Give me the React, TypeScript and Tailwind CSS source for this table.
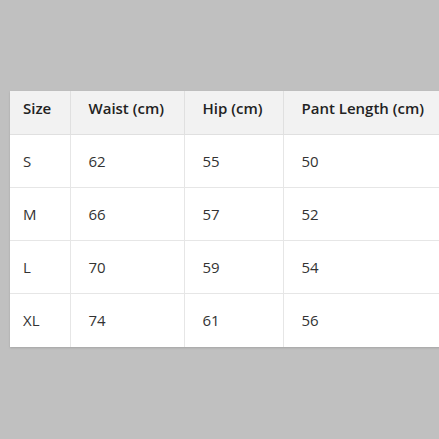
const rows = [
  ['S', '62', '55', '50'],
  ['M', '66', '57', '52'],
  ['L', '70', '59', '54'],
  ['XL', '74', '61', '56'],
];

export default function App() {
  return (
    <div className="h-[439px] w-[439px] overflow-hidden bg-[#c0c0c0] pt-[91px] pl-[10px] font-['Open_Sans',sans-serif]">
      <table className="w-[470px] table-fixed border-collapse bg-white text-left text-[15px] leading-[22px] text-[#333] shadow-[0_1px_2px_rgba(0,0,0,0.15)]">
        <colgroup>
          <col className="w-[60px]" />
          <col className="w-[114px]" />
          <col className="w-[99px]" />
          <col />
        </colgroup>
        <thead className="bg-[#f2f2f2]">
          <tr className="border-b border-[#e0e0e0]">
            <th className="pt-[6px] pb-[15px] pl-[13px] font-semibold text-[#222]">Size</th>
            <th className="border-l border-[#e0e0e0] pt-[6px] pb-[15px] pl-[18px] font-semibold text-[#222]">Waist (cm)</th>
            <th className="border-l border-[#e0e0e0] pt-[6px] pb-[15px] pl-[18px] font-semibold text-[#222]">Hip (cm)</th>
            <th className="border-l border-[#e0e0e0] pt-[6px] pb-[15px] pl-[18px] font-semibold text-[#222] whitespace-nowrap">Pant Length (cm)</th>
          </tr>
        </thead>
        <tbody>
          {rows.map((r, i) => {
            const last = i === rows.length - 1;
            const pad = last ? 'pt-[15px] pb-[16px]' : 'py-[15px]';
            return (
              <tr key={r[0]} className={last ? '' : 'border-b border-[#e6e6e6]'}>
                <td className={`${pad} pl-[13px]`}>{r[0]}</td>
                <td className={`${pad} border-l border-[#e6e6e6] pl-[18px]`}>{r[1]}</td>
                <td className={`${pad} border-l border-[#e6e6e6] pl-[18px]`}>{r[2]}</td>
                <td className={`${pad} border-l border-[#e6e6e6] pl-[18px]`}>{r[3]}</td>
              </tr>
            );
          })}
        </tbody>
      </table>
    </div>
  );
}
